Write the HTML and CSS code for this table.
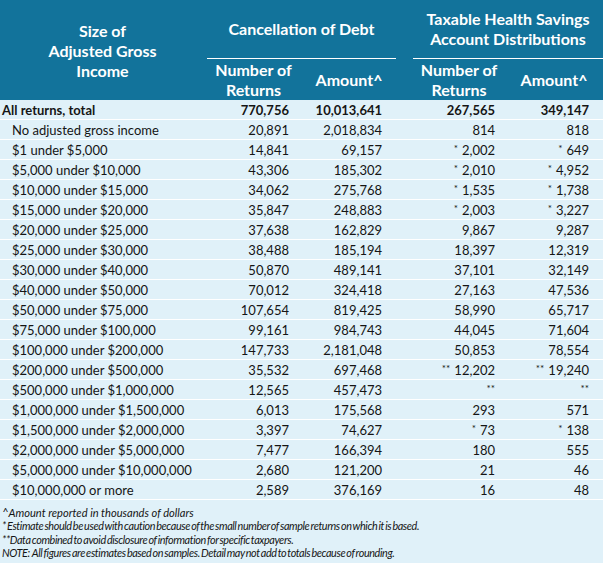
FILE: index.html
```html
<!DOCTYPE html>
<html>
<head>
<meta charset="utf-8">
<link rel="stylesheet" href="styles.css">
</head>
<body>
<div class="wrap">
<table class="t">
  <colgroup>
    <col class="c0"><col class="c1"><col class="c2"><col class="c3"><col class="c4">
  </colgroup>
  <thead>
    <tr class="h1">
      <th rowspan="2" class="lab">Size of<br>Adjusted Gross<br>Income</th>
      <th colspan="2" class="grp"><div class="grp-in g1">Cancellation of Debt</div></th>
      <th colspan="2" class="grp"><div class="grp-in g2">Taxable Health Savings<br>Account Distributions</div></th>
    </tr>
    <tr class="h2">
      <th class="s1">Number of<br>Returns</th>
      <th class="s2">Amount^</th>
      <th class="s3">Number of<br>Returns</th>
      <th class="s4">Amount^</th>
    </tr>
  </thead>
  <tbody>
    <tr class="tot"><td class="l0">All returns, total</td><td class="n1">770,756</td><td class="n2">10,013,641</td><td class="n3">267,565</td><td class="n4">349,147</td></tr>
    <tr><td class="l1">No adjusted gross income</td><td class="n1">20,891</td><td class="n2">2,018,834</td><td class="n3">814</td><td class="n4">818</td></tr>
    <tr><td class="l1">$1 under $5,000</td><td class="n1">14,841</td><td class="n2">69,157</td><td class="n3"><span class="ast">*</span>2,002</td><td class="n4"><span class="ast">*</span>649</td></tr>
    <tr><td class="l1">$5,000 under $10,000</td><td class="n1">43,306</td><td class="n2">185,302</td><td class="n3"><span class="ast">*</span>2,010</td><td class="n4"><span class="ast">*</span>4,952</td></tr>
    <tr><td class="l1">$10,000 under $15,000</td><td class="n1">34,062</td><td class="n2">275,768</td><td class="n3"><span class="ast">*</span>1,535</td><td class="n4"><span class="ast">*</span>1,738</td></tr>
    <tr><td class="l1">$15,000 under $20,000</td><td class="n1">35,847</td><td class="n2">248,883</td><td class="n3"><span class="ast">*</span>2,003</td><td class="n4"><span class="ast">*</span>3,227</td></tr>
    <tr><td class="l1">$20,000 under $25,000</td><td class="n1">37,638</td><td class="n2">162,829</td><td class="n3">9,867</td><td class="n4">9,287</td></tr>
    <tr><td class="l1">$25,000 under $30,000</td><td class="n1">38,488</td><td class="n2">185,194</td><td class="n3">18,397</td><td class="n4">12,319</td></tr>
    <tr><td class="l1">$30,000 under $40,000</td><td class="n1">50,870</td><td class="n2">489,141</td><td class="n3">37,101</td><td class="n4">32,149</td></tr>
    <tr><td class="l1">$40,000 under $50,000</td><td class="n1">70,012</td><td class="n2">324,418</td><td class="n3">27,163</td><td class="n4">47,536</td></tr>
    <tr><td class="l1">$50,000 under $75,000</td><td class="n1">107,654</td><td class="n2">819,425</td><td class="n3">58,990</td><td class="n4">65,717</td></tr>
    <tr><td class="l1">$75,000 under $100,000</td><td class="n1">99,161</td><td class="n2">984,743</td><td class="n3">44,045</td><td class="n4">71,604</td></tr>
    <tr><td class="l1">$100,000 under $200,000</td><td class="n1">147,733</td><td class="n2">2,181,048</td><td class="n3">50,853</td><td class="n4">78,554</td></tr>
    <tr><td class="l1">$200,000 under $500,000</td><td class="n1">35,532</td><td class="n2">697,468</td><td class="n3"><span class="ast">**</span>12,202</td><td class="n4"><span class="ast">**</span>19,240</td></tr>
    <tr><td class="l1">$500,000 under $1,000,000</td><td class="n1">12,565</td><td class="n2">457,473</td><td class="n3"><span class="ast solo">**</span></td><td class="n4"><span class="ast solo">**</span></td></tr>
    <tr><td class="l1">$1,000,000 under $1,500,000</td><td class="n1">6,013</td><td class="n2">175,568</td><td class="n3">293</td><td class="n4">571</td></tr>
    <tr><td class="l1">$1,500,000 under $2,000,000</td><td class="n1">3,397</td><td class="n2">74,627</td><td class="n3"><span class="ast">*</span>73</td><td class="n4"><span class="ast">*</span>138</td></tr>
    <tr><td class="l1">$2,000,000 under $5,000,000</td><td class="n1">7,477</td><td class="n2">166,394</td><td class="n3">180</td><td class="n4">555</td></tr>
    <tr><td class="l1">$5,000,000 under $10,000,000</td><td class="n1">2,680</td><td class="n2">121,200</td><td class="n3">21</td><td class="n4">46</td></tr>
    <tr><td class="l1">$10,000,000 or more</td><td class="n1">2,589</td><td class="n2">376,169</td><td class="n3">16</td><td class="n4">48</td></tr>
  </tbody>
</table>
<div class="notes">
  <p class="wide">^Amount reported in thousands of dollars</p>
  <p>* Estimate should be used with caution because of the small number of sample returns on which it is based.</p>
  <p>**Data combined to avoid disclosure of information for specific taxpayers.</p>
  <p>NOTE:&nbsp; All figures are estimates based on samples. Detail may not add to totals because of rounding.</p>
</div>
</div>
</body>
</html>
```

FILE: styles.css
```css
html, body {
  margin: 0;
  padding: 0;
  background: #ffffff;
}
.wrap {
  width: 603px;
  height: 563px;
  overflow: hidden;
  background: #e0f1f9;
  font-family: Lato, "Open Sans", sans-serif;
  color: #151515;
}
.t {
  width: 603px;
  border-collapse: collapse;
  table-layout: fixed;
}
.c0 { width: 205px; }
.c1 { width: 97px; }
.c2 { width: 94px; }
.c3 { width: 109px; }
.c4 { width: 98px; }

thead th {
  background: #12739b;
  color: #ffffff;
  font-weight: 700;
  font-size: 16px;
  line-height: 20px;
  padding: 0;
  text-align: center;
  vertical-align: middle;
}
.h1 { height: 60px; }
.h2 { height: 39px; }
.lab { padding-top: 1px; }
.grp { vertical-align: top; }
.grp-in {
  height: 58px;
  border-bottom: 1px solid #ffffff;
  display: flex;
  align-items: center;
  justify-content: center;
}
.g1 { margin-left: 2px; }
.g2 { margin-left: 17px; }
.s3 { padding-left: 17px; }

tbody td {
  font-size: 13px;
  line-height: 18px;
  height: 18px;
  padding: 1px 0 0 0;
  border-bottom: 1px solid #ffffff;
  white-space: nowrap;
  vertical-align: middle;
}
.l0 { padding-left: 2px; }
.l1 { padding-left: 12px; }
.n1, .n2, .n3, .n4 { text-align: right; }
.n1 { padding-right: 13px; }
.n2 { padding-right: 14px; }
.n3 { padding-right: 10px; }
.n4 { padding-right: 14px; }
.tot td { font-weight: 700; }

.ast {
  font-size: 10px;
  line-height: 0;
  position: relative;
  top: -3px;
  margin-right: 4px;
}
.ast.solo { margin-right: 0; }

.notes {
  padding: 6px 0 0 2px;
  font-style: italic;
  font-size: 11px;
  line-height: 13.4px;
  letter-spacing: -0.4px;
  word-spacing: -1px;
  color: #151515;
}
.notes p {
  margin: 0;
  height: 13.4px;
  white-space: nowrap;
  transform: scaleX(0.985);
  transform-origin: left center;
}
.notes p.wide {
  letter-spacing: 0;
  word-spacing: 0;
  transform: scaleX(1.01);
}
```
